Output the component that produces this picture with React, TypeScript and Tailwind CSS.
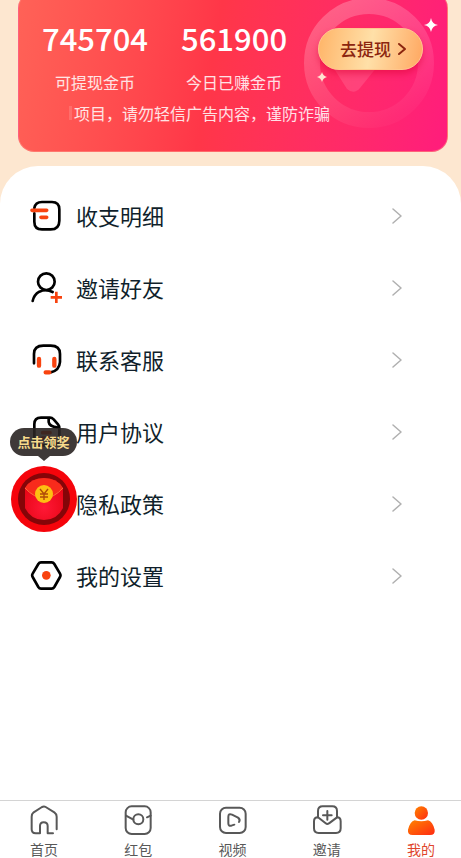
import React from 'react';

const stroke = {
  fill: 'none',
  stroke: 'currentColor',
  strokeLinecap: 'round' as const,
  strokeLinejoin: 'round' as const,
};

function MenuIcon({ children }: { children: React.ReactNode }) {
  return (
    <svg viewBox="0 0 96 96" className="size-8 shrink-0 text-black" strokeWidth={8} {...stroke} aria-hidden="true">
      {children}
    </svg>
  );
}

function TabIcon({ children }: { children: React.ReactNode }) {
  return (
    <svg viewBox="0 0 90 90" className="size-[30px]" strokeWidth={6} {...stroke} aria-hidden="true">
      {children}
    </svg>
  );
}

const ORANGE = '#f8430f';

const menuItems = [
  {
    label: '收支明细',
    icon: (
      <MenuIcon>
        <path d="M13 24Q16 6 36 6H66Q88 6 88 28V62Q88 88 62 88H36Q13 88 13 65V40" />
        <path d="M6 31H50M33 52H50" stroke={ORANGE} strokeWidth={11} />
      </MenuIcon>
    ),
  },
  {
    label: '邀请好友',
    icon: (
      <MenuIcon>
        <circle cx="49" cy="29" r="25" />
        <path d="M8 87Q12 68 28 59Q48 50 68 60" />
        <path d="M62 76H96M79 59V93" stroke={ORANGE} strokeLinecap="butt" />
      </MenuIcon>
    ),
  },
  {
    label: '联系客服',
    icon: (
      <MenuIcon>
        <path d="M12 58V30Q12 5 40 5H62Q90 5 90 30V54Q88 80 62 85" />
        <path d="M27 45V65M73 45V65M47 85H58" stroke={ORANGE} strokeWidth={13} />
      </MenuIcon>
    ),
  },
  {
    label: '用户协议',
    icon: (
      <MenuIcon>
        <path d="M33 5H60Q66 5 71 10L84 25Q88 30 88 36V66Q88 88 66 88H35Q13 88 13 66V25Q13 5 33 5Z" />
        <path d="M56 8V18Q58 32 82 34" />
        <path d="M38 50H60M38 66H60" stroke={ORANGE} strokeWidth={11} />
      </MenuIcon>
    ),
  },
  {
    label: '隐私政策',
    icon: (
      <MenuIcon>
        <path d="M49 8L82 20V48Q80 74 49 88Q18 74 16 48V20Z" />
        <path d="M36 46L46 56L62 38" stroke={ORANGE} />
      </MenuIcon>
    ),
  },
  {
    label: '我的设置',
    icon: (
      <MenuIcon>
        <path d="M33 7H65Q70 7 73 12L90 41Q93 46 90 51L73 81Q70 86 65 86H33Q28 86 25 81L8 51Q5 46 8 41L25 12Q28 7 33 7Z" />
        <circle cx="49" cy="46" r="13" fill={ORANGE} stroke="none" />
      </MenuIcon>
    ),
  },
];

const tabs = [
  {
    label: '首页',
    icon: (
      <TabIcon>
        <path d="M83 73V35Q83 27 76 22L50 6Q45 3 39 6L14 22Q8 27 8 35V73Q8 85 20 85H33V63Q33 52 44 52Q56 52 56 63V85H72" />
      </TabIcon>
    ),
  },
  {
    label: '红包',
    icon: (
      <TabIcon>
        <rect x="8" y="4" width="75" height="83" rx="18" />
        <circle cx="46" cy="43" r="15" />
        <path d="M9 32L31 44M72 37L83 32" />
      </TabIcon>
    ),
  },
  {
    label: '视频',
    icon: (
      <TabIcon>
        <rect x="6" y="8" width="77" height="76" rx="18" />
        <path d="M49 59L40 62Q31 64 31 55V36Q31 24 42 29L60 38Q68 44 63 51" />
      </TabIcon>
    ),
  },
  {
    label: '邀请',
    icon: (
      <TabIcon>
        <path d="M18 37V18Q18 4 32 4H61Q75 4 75 18V37" />
        <path d="M18 37Q6 37 6 49V70Q6 84 20 84H72Q86 84 86 70V49Q86 37 75 37L51 55Q46 59 41 55Z" />
        <path d="M33 31H59M46 18V44" />
      </TabIcon>
    ),
  },
  {
    label: '我的',
    active: true,
    icon: (
      <svg viewBox="0 0 90 90" className="size-[30px]" aria-hidden="true">
        <defs>
          <linearGradient id="me" x1="0" y1="0" x2="1" y2="1">
            <stop offset="0" stopColor="#ff8400" />
            <stop offset="1" stopColor="#ff2a12" />
          </linearGradient>
        </defs>
        <circle cx="46" cy="24" r="20" fill="url(#me)" />
        <path d="M26 46Q46 52 66 46Q80 50 86 74Q88 90 72 90H20Q4 90 6 74Q12 50 26 46Z" fill="url(#me)" />
      </svg>
    ),
  },
];

function Balance({ value, label }: { value: string; label: string }) {
  return (
    <div className="text-center">
      <div className="text-[31px] font-medium leading-10">{value}</div>
      <div className="mt-3 text-base leading-6 text-white/85">{label}</div>
    </div>
  );
}

function WalletCard() {
  return (
    <section className="relative -mt-2 ml-[18px] mr-[13px] overflow-hidden rounded-2xl border border-[#ff8a80]/60 bg-linear-100 from-[#ff6257] via-[#ff3648] via-45% to-[#ff1c7c] pt-[25px] pb-[26px] pl-[23px] pr-6 text-white">
      <svg viewBox="0 0 150 150" className="absolute -top-2 right-0 size-[150px]" aria-hidden="true">
        <defs>
          <linearGradient id="ring" x1="0.2" y1="0" x2="0.7" y2="1">
            <stop offset="0" stopColor="#fff" stopOpacity="0.24" />
            <stop offset="1" stopColor="#fff" stopOpacity="0.03" />
          </linearGradient>
        </defs>
        <circle cx="72" cy="78" r="57" fill="none" stroke="url(#ring)" strokeWidth="16" />
        <path d="M36 82H80L63 103Q57 110 50 104Z" fill="#fff" fillOpacity="0.12" />
        <path d="M134 33Q135 39 141 40Q135 41 134 47Q133 41 127 40Q133 39 134 33Z" fill="#fff" />
        <path d="M25 87Q26 91 30 92Q26 93 25 97Q24 93 20 92Q24 91 25 87Z" fill="#ffe4d0" />
      </svg>
      <div className="relative flex items-start justify-between">
        <div className="flex gap-[33px]">
          <Balance value="745704" label="可提现金币" />
          <Balance value="561900" label="今日已赚金币" />
        </div>
        <button
          type="button"
          className="mt-2.5 flex h-[42px] shrink-0 items-center gap-1.5 rounded-full border border-[#ffc78d] bg-linear-100 from-[#ffb467] via-[#ffe0a8] to-[#ffa760] pl-[21px] pr-[15px] text-[17px] font-medium text-[#8c260f] shadow-[0_4px_6px_rgba(220,0,50,0.45)]"
        >
          去提现
          <svg viewBox="0 0 10 14" className="h-3.5 w-2.5" strokeWidth={2} {...stroke} aria-hidden="true">
            <path d="M2 2L8 7L2 12" />
          </svg>
        </button>
      </div>
      <div className="relative mt-[7px] ml-[27px] flex items-center gap-0.5 text-base leading-6 text-white/85">
        <span className="h-3.5 w-[3px] bg-white/15" />
        <p className="whitespace-nowrap">项目，请勿轻信广告内容，谨防诈骗</p>
      </div>
    </section>
  );
}

function RewardFloat() {
  return (
    <button type="button" className="absolute left-2.5 top-[262px] flex w-[67px] flex-col items-center">
      <span className="relative w-full rounded-full bg-[#292422]/90 text-center text-[13px] font-bold leading-7 text-[#f8dc8c]">
        点击领奖
        <span className="absolute left-1/2 top-full -ml-1.5 border-x-6 border-t-[5px] border-x-transparent border-t-[#292422]/90" />
      </span>
      <svg viewBox="0 0 66 66" className="mt-2.5 size-[66px]" aria-hidden="true">
        <defs>
          <radialGradient id="packet" cx="0.5" cy="0.7" r="0.6">
            <stop offset="0" stopColor="#ff1836" />
            <stop offset="1" stopColor="#e90718" />
          </radialGradient>
        </defs>
        <circle cx="33" cy="33" r="33" fill="#f5040b" />
        <circle cx="33" cy="33" r="26" fill="#850508" />
        <path d="M14 22Q20 12 33 12Q46 12 52 22V42Q46 54 33 54Q20 54 14 42Z" fill="url(#packet)" />
        <path d="M14 22Q20 12 33 12Q46 12 52 22Q43 32 33 32Q23 32 14 22Z" fill="#f82b1c" />
        <path d="M14 22Q23 32 33 32Q43 32 52 22" fill="none" stroke="#ff6a3c" strokeWidth="1" />
        <circle cx="33" cy="28" r="9" fill="#fdbf12" />
        <path d="M29 23L33 28L37 23M33 28V34M29 28H37M29 31H37" fill="none" stroke="#b04a08" strokeWidth="1.4" />
      </svg>
    </button>
  );
}

export default function App() {
  return (
    <div className="flex min-h-screen flex-col overflow-hidden bg-[#fde7d0] font-['Noto_Sans_CJK_SC',sans-serif]">
      <WalletCard />

      <main className="relative mt-3.5 flex-1 rounded-t-[38px] bg-white pt-3.5">
        <ul>
          {menuItems.map((item) => (
            <li key={item.label}>
              <button type="button" className="flex h-18 w-full items-center pl-[30px] pr-[59px]">
                {item.icon}
                <span className="ml-3.5 pb-0.5 text-[22px] leading-8 text-[#101f2b]">{item.label}</span>
                <svg viewBox="0 0 10 16" className="ml-auto h-4 w-2.5 text-[#b0b0b0]" strokeWidth={1.5} {...stroke} aria-hidden="true">
                  <path d="M1 1L9 8L1 15" />
                </svg>
              </button>
            </li>
          ))}
        </ul>
        <RewardFloat />
      </main>

      <nav className="flex justify-between border-t border-[#d4d4d4] bg-white pl-4 pr-3 pt-1">
        {tabs.map((tab) => (
          <a
            key={tab.label}
            href="#"
            className={`flex w-14 flex-col items-center gap-[5px] text-sm leading-[18px] ${tab.active ? 'text-[#e0452c]' : 'text-[#585858]'}`}
          >
            {tab.icon}
            {tab.label}
          </a>
        ))}
      </nav>
    </div>
  );
}
